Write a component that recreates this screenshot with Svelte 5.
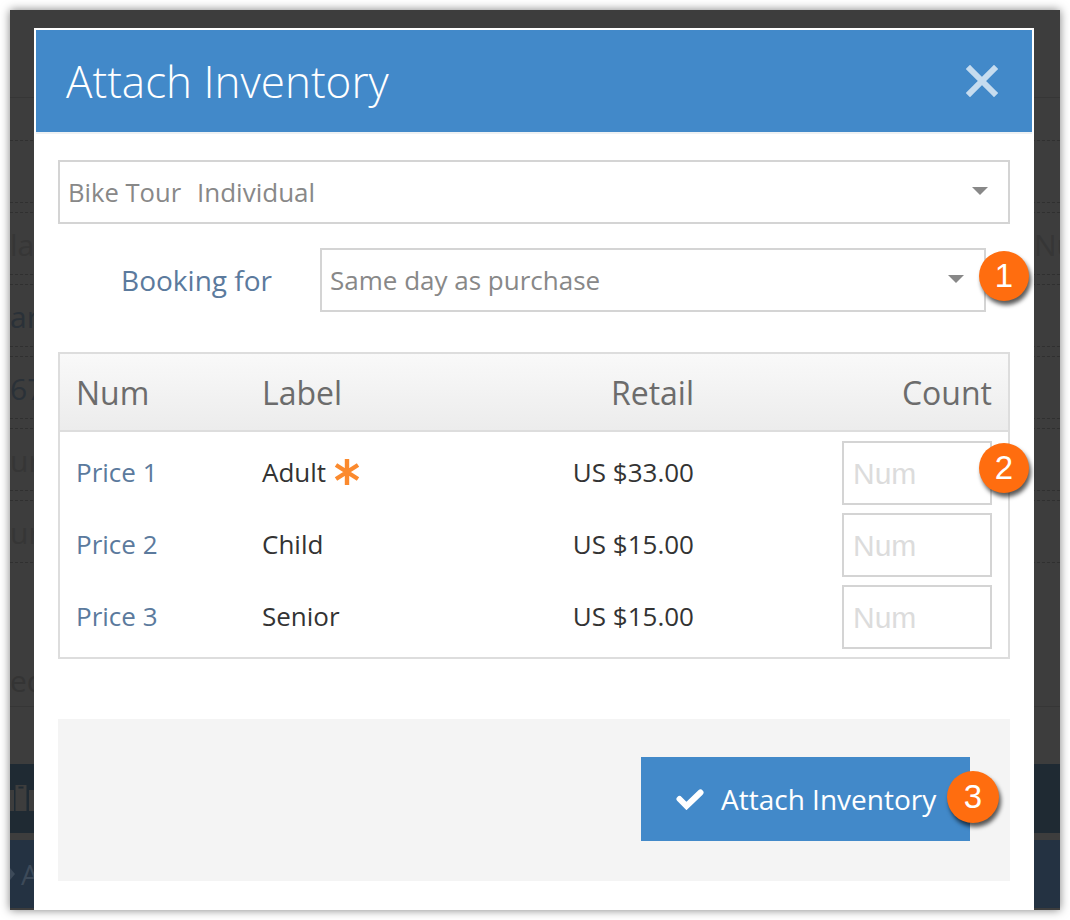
<script>
  const rows = [
    { left: '', right: '', tone: '' },
    { left: 'la', right: 'Num', tone: 'faint' },
    { left: 'ar', right: '', tone: 'strong' },
    { left: '67', right: '', tone: 'strong' },
    { left: 'ur', right: '', tone: 'faint' },
    { left: 'ur', right: '', tone: 'faint' }
  ];
  const prices = [
    { num: 'Price 1', label: 'Adult', retail: 'US $33.00', required: true, badge: '2' },
    { num: 'Price 2', label: 'Child', retail: 'US $15.00' },
    { num: 'Price 3', label: 'Senior', retail: 'US $15.00' }
  ];
</script>

<div class="window">
  <div class="backdrop">
    <div class="bar"></div>
    {#each rows as row}
      <div class="row {row.tone}">
        <span class="left">{row.left}</span>
        <span class="right">{row.right}</span>
      </div>
    {/each}
    <div class="tail"><span class="left faint">ed</span></div>
    <div class="panel">
      <svg width="24" height="27" viewBox="0 0 24 27">
        <path d="M0 5h4v21H0zM5.5 0h11v26h-11zM19 5h5v21h-5z" fill="#3d3d3d" />
        <path d="M8.5 2.5h5" stroke="#1f2a33" stroke-width="2" />
      </svg>
    </div>
    <div class="panel navy"><span class="tri"></span><span class="arrow">A</span></div>
  </div>

  <div class="modal" role="dialog" aria-label="Attach Inventory">
    <header class="head">
      <h1>Attach Inventory</h1>
      <svg class="close" width="32" height="32" viewBox="0 0 32 32" aria-label="Close">
        <path d="M4 4 28 28M28 4 4 28" stroke="#c6dcef" stroke-width="6" stroke-linecap="square" fill="none" />
      </svg>
    </header>

    <div class="content">
      <div class="select first">
        <span class="value"><span class="strong-value">Bike Tour</span><span class="sub">Individual</span></span>
        <span class="caret"></span>
      </div>

      <div class="booking">
        <span class="booking-label">Booking for</span>
        <div class="select inner">
          <span class="value">Same day as purchase</span>
          <span class="caret"></span>
        </div>
        <span class="badge one">1</span>
      </div>

      <div class="table">
        <div class="grid thead">
          <span>Num</span>
          <span>Label</span>
          <span class="end">Retail</span>
          <span class="end">Count</span>
        </div>
        <div class="tbody">
          {#each prices as p}
            <div class="grid trow">
              <span class="num">{p.num}</span>
              <span class="label">
                {p.label}
                {#if p.required}
                  <svg class="star" width="26" height="28" viewBox="0 0 26 28">
                    <path d="M13 1V27M2 7 24 21M24 7 2 21" stroke="#fb8a2e" stroke-width="4.4" fill="none" />
                  </svg>
                {/if}
              </span>
              <span class="end retail">{p.retail}</span>
              <span class="end count">
                <input placeholder="Num" aria-label="Count for {p.label}" />
                {#if p.badge}<span class="badge two">{p.badge}</span>{/if}
              </span>
            </div>
          {/each}
        </div>
      </div>

      <div class="footer">
        <button type="button">
          <svg width="28" height="22" viewBox="0 0 28 22">
            <path d="M3.5 11 10.5 18 24.5 4.5" stroke="#fff" stroke-width="6" fill="none" stroke-linejoin="miter" stroke-linecap="round" />
          </svg>
          <span>Attach Inventory</span>
          <span class="badge three">3</span>
        </button>
      </div>
    </div>
  </div>
</div>

<style>
  :global(body) {
    margin: 0;
    background: #fff;
  }
  .window {
    position: relative;
    box-sizing: border-box;
    width: 1050px;
    height: 900px;
    margin: 10px;
    background: #3d3d3d;
    box-shadow: 0 0 9px rgba(0, 0, 0, 0.5);
    font-family: "Open Sans", sans-serif;
  }
  .backdrop {
    display: flex;
    flex-direction: column;
    height: 100%;
    overflow: hidden;
  }
  .bar {
    flex: none;
    height: 87px;
    margin-bottom: 42px;
    border-bottom: 1px solid #363636;
  }
  .row {
    flex: none;
    box-sizing: border-box;
    height: 63px;
    margin-bottom: 9px;
    padding-top: 2px;
    border-top: 1px dashed #303030;
    border-bottom: 1px dashed #303030;
    display: flex;
    justify-content: space-between;
    align-items: center;
    font-size: 30px;
    color: #363636;
  }
  .row.strong {
    color: #2a3138;
  }
  .left {
    white-space: nowrap;
  }
  .right {
    width: 26px;
    overflow: hidden;
    white-space: nowrap;
  }
  .tail {
    flex: none;
    box-sizing: border-box;
    height: 135px;
    margin-bottom: 57px;
    border-bottom: 1px solid #363636;
    display: flex;
    align-items: flex-end;
    font-size: 30px;
    color: #343434;
    padding-bottom: 5px;
  }
  .panel {
    flex: none;
    height: 69px;
    background: #1f2a33;
    display: flex;
    align-items: center;
    margin-bottom: 7px;
  }
  .panel.navy {
    height: 68px;
    background: #243242;
    margin-bottom: 0;
  }
  .tri {
    width: 0;
    height: 0;
    border-left: 5px solid #3d4a59;
    border-top: 6px solid transparent;
    border-bottom: 6px solid transparent;
  }
  .arrow {
    margin-left: 6px;
    font-size: 28px;
    color: #3d4a59;
  }

  .modal {
    position: absolute;
    left: 24px;
    top: 18px;
    width: 1000px;
    height: 882px;
    box-sizing: border-box;
    background: #fff;
    padding: 2px 2px 0;
  }
  .head {
    height: 104px;
    box-sizing: border-box;
    background: #4289c9;
    border-bottom: 2px solid #eef1f3;
    display: flex;
    align-items: center;
    justify-content: space-between;
    padding: 0 34px 0 30px;
  }
  h1 {
    margin: 0;
    font-size: 44px;
    font-weight: 300;
    color: #fff;
    line-height: 1;
  }
  .close {
    display: block;
  }
  .content {
    padding: 26px 22px 0;
    display: flex;
    flex-direction: column;
  }
  .select {
    box-sizing: border-box;
    height: 64px;
    border: 2px solid #d4d4d4;
    display: flex;
    align-items: center;
    justify-content: space-between;
    padding: 0 20px 0 8px;
    color: #888;
    font-size: 26px;
  }
  .strong-value {
    display: inline-block;
    width: 129px;
    font-size: 25.6px;
    font-weight: 500;
  }
  .caret {
    width: 0;
    height: 0;
    border-left: 8px solid transparent;
    border-right: 8px solid transparent;
    border-top: 8px solid #888;
    margin-top: -3px;
  }
  .booking {
    position: relative;
    display: flex;
    align-items: center;
    margin-top: 24px;
    padding-right: 24px;
  }
  .booking-label {
    width: 214px;
    margin-right: 48px;
    text-align: right;
    font-size: 28px;
    color: #5b7a9d;
  }
  .inner {
    flex: 1;
  }
  .table {
    margin-top: 40px;
    border: 2px solid #dddddd;
    height: 307px;
    box-sizing: border-box;
  }
  .grid {
    display: grid;
    grid-template-columns: 186px 215px 217px 298px;
    padding: 0 16px;
    align-items: center;
  }
  .thead {
    height: 78px;
    box-sizing: border-box;
    background: linear-gradient(#f9f9f9, #ececec);
    border-bottom: 2px solid #dddddd;
    font-size: 32px;
    color: #6c6c6c;
  }
  .end {
    text-align: right;
  }
  .tbody {
    padding-top: 5px;
  }
  .trow {
    height: 72px;
    font-size: 26px;
    color: #333;
  }
  .num {
    color: #5b7a9d;
    padding-bottom: 2px;
  }
  .label {
    display: flex;
    align-items: center;
    gap: 8px;
    padding-bottom: 2px;
  }
  .retail {
    padding-bottom: 2px;
  }
  .count {
    position: relative;
    display: flex;
    justify-content: flex-end;
  }
  input {
    box-sizing: border-box;
    width: 150px;
    height: 64px;
    border: 2px solid #d4d4d4;
    background: #fff;
    padding: 2px 9px 0;
    font-family: "Liberation Sans", sans-serif;
    font-size: 30px;
    outline: none;
  }
  input::placeholder {
    color: #dcdcdc;
    opacity: 1;
  }
  .footer {
    margin-top: 60px;
    height: 162px;
    box-sizing: border-box;
    background: #f4f4f4;
    padding: 38px 40px 0 0;
    display: flex;
    justify-content: flex-end;
    align-items: flex-start;
  }
  button {
    position: relative;
    box-sizing: border-box;
    width: 329px;
    height: 84px;
    border: 0;
    background: #4289c9;
    color: #fff;
    font-family: "Open Sans", sans-serif;
    font-size: 28px;
    display: flex;
    align-items: center;
    gap: 17px;
    padding: 0 0 0 35px;
  }
  .badge {
    position: absolute;
    box-sizing: border-box;
    width: 50px;
    height: 50px;
    border-radius: 50%;
    background: #ff6d0f;
    color: #fff;
    font-family: "Liberation Sans", sans-serif;
    font-size: 33px;
    line-height: 50px;
    text-align: center;
    box-shadow: 2px 4px 4px rgba(0, 0, 0, 0.65);
  }
  .one {
    right: -19px;
    top: 3px;
  }
  .two {
    right: -37px;
    top: 2px;
  }
  .three {
    width: 52px;
    height: 52px;
    line-height: 52px;
    right: -29px;
    top: 14px;
  }
</style>
